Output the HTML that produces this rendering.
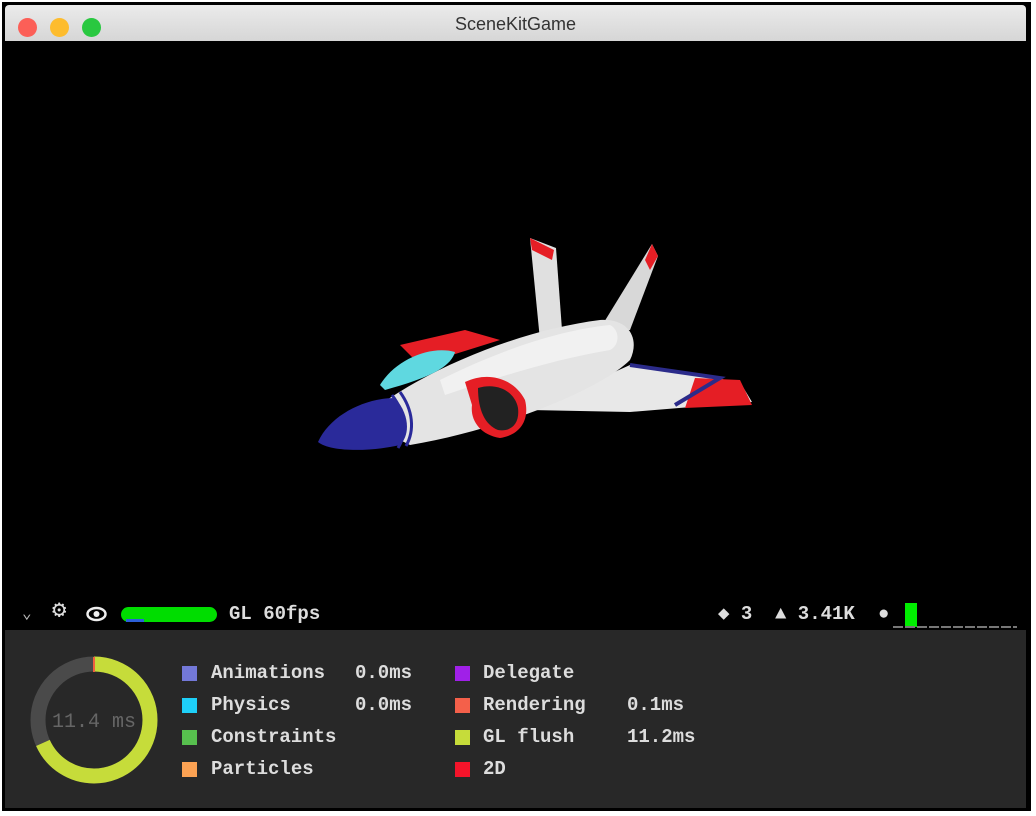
<!DOCTYPE html>
<html><head><style>
body{margin:0;width:1036px;height:816px;background:#fff;position:relative;overflow:hidden;font-family:"Liberation Mono",monospace}
#frame{position:absolute;left:2px;top:2px;width:1029px;height:809px;background:#000}
#title{position:absolute;left:5px;top:5px;width:1021px;height:36px;background:linear-gradient(#ebebeb,#d6d6d6);border-radius:4px 4px 0 0}
#title .t{position:absolute;width:100%;text-align:center;top:9px;font:18px "Liberation Sans",sans-serif;color:#333}
.dot{position:absolute;top:13px;width:19px;height:19px;border-radius:50%}
#panel{position:absolute;left:5px;top:630px;width:1021px;height:178px;background:#282828}
.m{position:absolute;font-size:19px;font-weight:bold;color:#ddd;line-height:20px;white-space:pre}
.sq{position:absolute;width:15px;height:15px}
</style></head><body>
<div id="frame"></div>
<div id="title"><div class="t">SceneKitGame</div>
<div class="dot" style="left:13px;background:#fc5f57"></div>
<div class="dot" style="left:45px;background:#fdbc2e"></div>
<div class="dot" style="left:77px;background:#29c840"></div></div>

<svg style="position:absolute;left:300px;top:220px" width="480" height="250" viewBox="0 0 480 250">
<polygon points="230,18 256,28 262,110 240,120" fill="#e0e0e0"/>
<polygon points="230,18 254,30 252,40 232,30" fill="#e51e25"/>
<polygon points="352,24 358,36 330,110 298,112" fill="#d8d8d8"/>
<polygon points="352,24 358,36 350,50 345,40" fill="#e51e25"/>
<polygon points="100,125 165,110 200,120 120,145" fill="#e51e25"/>
<polygon points="230,190 330,145 440,162 452,182 330,192" fill="#e8e8e8"/>
<polygon points="395,158 440,160 452,185 385,188" fill="#e51e25"/>
<polyline points="330,145 420,158 375,185" fill="none" stroke="#2b2b8a" stroke-width="4"/>
<path d="M60,200 C120,150 220,110 300,100 C330,98 340,120 330,140 C300,170 200,210 110,225 Z" fill="#e4e4e4"/>
<path d="M140,160 C200,130 260,110 310,105 C320,110 320,125 310,130 C250,140 190,160 145,175 Z" fill="#fafafa" opacity=".6"/>
<path d="M80,165 C95,140 130,125 155,132 C150,150 120,160 85,170 Z" fill="#5fd8e0"/>
<path d="M18,222 C30,195 65,178 95,178 C110,195 110,215 100,225 C70,232 30,232 18,222 Z" fill="#2a2a9a"/>
<path d="M92,175 C105,192 108,212 98,228" fill="none" stroke="#2a2a9a" stroke-width="3"/>
<path d="M100,172 C113,190 115,210 106,226" fill="none" stroke="#2a2a9a" stroke-width="3"/>
<path d="M165,162 C190,150 215,160 225,180 C230,200 220,215 200,218 C180,215 170,200 172,185 Z" fill="#e51e25"/>
<path d="M178,168 C198,162 215,172 218,188 C220,205 210,212 198,210 C185,205 178,190 178,168 Z" fill="#222"/>
</svg>

<div class="m" style="left:22px;top:604px;font-weight:normal;color:#bbb;font-size:16px">&#8964;</div>
<div class="m" style="left:52px;top:602px;font-size:24px">&#9881;</div>
<svg style="position:absolute;left:86px;top:606px" width="21" height="16"><ellipse cx="10.5" cy="8" rx="9" ry="6" fill="none" stroke="#eee" stroke-width="2.5"/><circle cx="10.5" cy="8" r="3" fill="#eee"/></svg>
<div style="position:absolute;left:121px;top:607px;width:96px;height:15px;border-radius:8px;background:#0d0"></div>
<div style="position:absolute;left:126px;top:619px;width:18px;height:3px;background:#2c5fd8"></div>
<div class="m" style="left:229px;top:604px">GL 60fps</div>
<div class="m" style="left:718px;top:604px">&#9670; 3</div>
<div class="m" style="left:775px;top:604px">&#9650; 3.41K</div>
<div class="m" style="left:878px;top:604px">&#9679;</div>
<div style="position:absolute;left:905px;top:603px;width:12px;height:24px;background:#0e0"></div>
<div style="position:absolute;left:893px;top:626px;width:124px;height:2px;background:repeating-linear-gradient(90deg,#777 0 10px,transparent 10px 12px)"></div>

<div id="panel"></div>
<svg style="position:absolute;left:28px;top:654px" width="132" height="132">
<circle cx="66" cy="66" r="56" fill="none" stroke="#4a4a4a" stroke-width="15"/>
<circle cx="66" cy="66" r="56" fill="none" stroke="#c6dc3a" stroke-width="15" stroke-dasharray="240 400" transform="rotate(-90 66 66)"/>
<line x1="66" y1="3" x2="66" y2="18" stroke="#f06040" stroke-width="2"/>
<text x="66" y="73" text-anchor="middle" font-family="Liberation Mono" font-size="20" fill="#666">11.4 ms</text>
</svg>
<div class="sq" style="left:182px;top:666px;background:#7378d8"></div>
<div class="sq" style="left:182px;top:698px;background:#1ed0f8"></div>
<div class="sq" style="left:182px;top:730px;background:#57c04e"></div>
<div class="sq" style="left:182px;top:762px;background:#fca253"></div>
<div class="m" style="left:211px;top:663px">Animations</div>
<div class="m" style="left:355px;top:663px">0.0ms</div>
<div class="m" style="left:211px;top:695px">Physics</div>
<div class="m" style="left:355px;top:695px">0.0ms</div>
<div class="m" style="left:211px;top:727px">Constraints</div>
<div class="m" style="left:211px;top:759px">Particles</div>
<div class="sq" style="left:455px;top:666px;background:#a020e8"></div>
<div class="sq" style="left:455px;top:698px;background:#f4604a"></div>
<div class="sq" style="left:455px;top:730px;background:#c6dc3a"></div>
<div class="sq" style="left:455px;top:762px;background:#f4142a"></div>
<div class="m" style="left:483px;top:663px">Delegate</div>
<div class="m" style="left:483px;top:695px">Rendering</div>
<div class="m" style="left:627px;top:695px">0.1ms</div>
<div class="m" style="left:483px;top:727px">GL flush</div>
<div class="m" style="left:627px;top:727px">11.2ms</div>
<div class="m" style="left:483px;top:759px">2D</div>
</body></html>
